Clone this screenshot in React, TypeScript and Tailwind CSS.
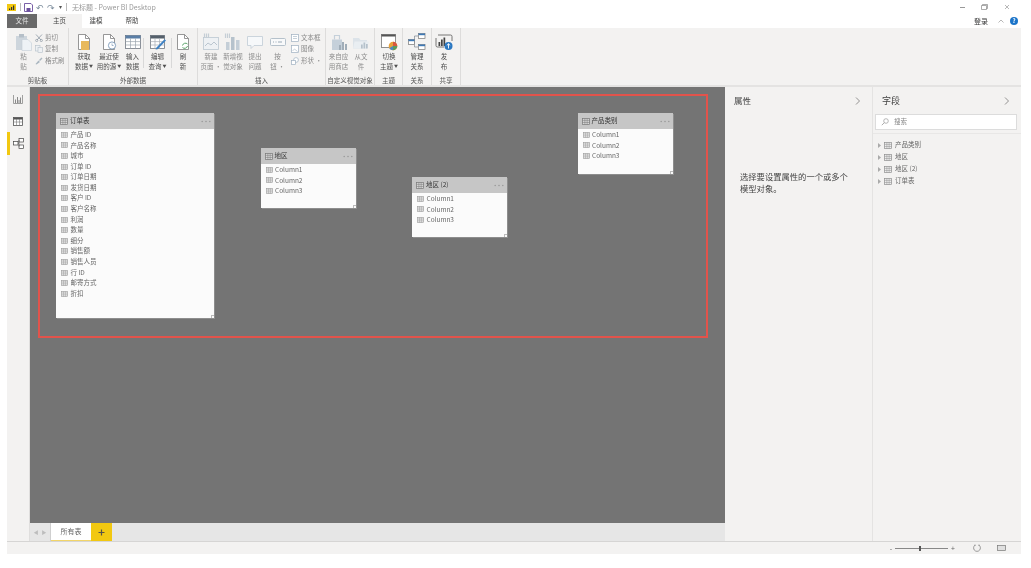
import React from "react";

const font = { fontFamily: '"Noto Sans CJK SC", "Liberation Sans", sans-serif' };

const TableGlyph = ({ c = "#8f8f8f", fill = "#e4e4e4", w = 9, h = 8 }: { c?: string; fill?: string; w?: number; h?: number }) => (
  <svg width={w} height={h} viewBox="0 0 9 8" className="shrink-0">
    <rect x="0.5" y="0.5" width="8" height="7" fill={fill} stroke={c} strokeWidth="0.8" />
    <path d="M0.5 2.7H8.5M0.5 5.1H8.5M3.2 0.5V7.5M5.8 0.5V7.5" stroke={c} strokeWidth="0.6" fill="none" />
  </svg>
);

const Paper = ({ children }: { children?: React.ReactNode }) => (
  <svg width="18" height="18" viewBox="0 0 18 18">
    <path d="M3.5 1.5H10.5L14.5 5.5V16.5H3.5Z" fill="#fff" stroke="#7d7d7d" strokeWidth="0.8" />
    <path d="M10.5 1.5V5.5H14.5" fill="none" stroke="#7d7d7d" strokeWidth="0.8" />
    {children}
  </svg>
);

const GridIcon = () => (
  <svg width="18" height="18" viewBox="0 0 18 18">
    <rect x="1.5" y="2.5" width="15" height="13" fill="#fff" stroke="#6f7780" strokeWidth="0.8" />
    <rect x="1.5" y="2.5" width="15" height="3" fill="#5a7ea6" />
    <path d="M1.5 8.6H16.5M1.5 12H16.5M6.5 5.5V15.5M11.5 5.5V15.5" stroke="#9aa3ad" strokeWidth="0.7" />
  </svg>
);

const EditIcon = () => (
  <svg width="18" height="18" viewBox="0 0 18 18">
    <rect x="1.5" y="2.5" width="14" height="13" fill="#fff" stroke="#6f7780" strokeWidth="0.8" />
    <rect x="1.5" y="2.5" width="14" height="3" fill="#55606b" />
    <path d="M1.5 8.6H15.5M1.5 12H15.5M6 5.5V15.5M10.5 5.5V15.5" stroke="#a8aeb5" strokeWidth="0.7" />
    <path d="M7 15L15.5 6.2L17 7.6L8.6 16.2L6.6 16.6Z" fill="#3f82c4" />
  </svg>
);

const Paste = () => (
  <svg width="18" height="18" viewBox="0 0 18 18">
    <rect x="1" y="3" width="11" height="14" fill="#cdd5dc" />
    <rect x="4" y="1" width="5" height="3.5" fill="#b5bfc8" />
    <path d="M7 6.5H13L16.5 10V17.5H7Z" fill="#eef2f6" stroke="#c2ccd6" strokeWidth="0.6" />
  </svg>
);

const NewPage = () => (
  <svg width="18" height="18" viewBox="0 0 18 18">
    <rect x="1.5" y="4.5" width="15" height="12" fill="#eef1f4" stroke="#bcc8d2" strokeWidth="0.8" />
    <path d="M2.5 0.5V5M4.5 0.5V5M6.5 0.5V5" stroke="#c5ced6" strokeWidth="1.2" />
    <path d="M3 13L6 10L9 12L12 9L15 12" stroke="#b3c0cb" strokeWidth="0.9" fill="none" />
  </svg>
);

const NewVisual = () => (
  <svg width="18" height="18" viewBox="0 0 18 18">
    <path d="M1.5 0.5V5M3.5 0.5V5M5.5 0.5V5" stroke="#c5ced6" strokeWidth="1.2" />
    <rect x="2" y="9" width="3.5" height="8" fill="#c4ced7" />
    <rect x="7" y="4" width="3.5" height="13" fill="#b6c2cc" />
    <rect x="12" y="7" width="3.5" height="10" fill="#c4ced7" />
  </svg>
);

const Bubble = () => (
  <svg width="18" height="18" viewBox="0 0 18 18">
    <path d="M1.5 3.5H16.5V12.5H8L5 15.5V12.5H1.5Z" fill="#f6f8fa" stroke="#c0ccd6" strokeWidth="0.8" />
  </svg>
);

const ButtonIcon = () => (
  <svg width="18" height="18" viewBox="0 0 18 18">
    <rect x="1.5" y="5.5" width="15" height="7" rx="1" fill="#f8f9fa" stroke="#aebbc6" strokeWidth="0.9" />
    <path d="M4 9H5M6.5 9H7.5M9 9H13" stroke="#9aa9b6" strokeWidth="1" />
  </svg>
);

const Store = () => (
  <svg width="18" height="18" viewBox="0 0 18 18">
    <path d="M2 6.5H12V17H2Z" fill="#c5d0da" />
    <path d="M4.5 6.5V2.5H9.5V6.5" fill="none" stroke="#c5d0da" strokeWidth="1.2" />
    <rect x="9" y="12" width="2" height="5" fill="#a0adb8" />
    <rect x="12" y="9" width="2" height="8" fill="#a0adb8" />
    <rect x="15" y="11" width="2" height="6" fill="#a0adb8" />
  </svg>
);

const Folder = () => (
  <svg width="18" height="18" viewBox="0 0 18 18">
    <path d="M1 5H7L8.5 7H15V15.5H1Z" fill="#dce3e9" />
    <path d="M2.5 8.5H17L15 15.5H1Z" fill="#e9eef2" />
    <rect x="9" y="11.5" width="1.7" height="4" fill="#b5c1cb" />
    <rect x="11.5" y="9.5" width="1.7" height="6" fill="#b5c1cb" />
    <rect x="14" y="11" width="1.7" height="4.5" fill="#b5c1cb" />
  </svg>
);

const Theme = () => (
  <svg width="18" height="18" viewBox="0 0 18 18">
    <rect x="1.5" y="1.5" width="14" height="13" fill="#fff" stroke="#777" strokeWidth="0.8" />
    <rect x="1.5" y="1.5" width="14" height="2" fill="#555" />
    <circle cx="13" cy="13" r="4.3" fill="#e8a23c" />
    <path d="M13 13V8.7A4.3 4.3 0 0 1 17.3 13Z" fill="#d9573f" />
    <path d="M13 13H17.3A4.3 4.3 0 0 1 13 17.3Z" fill="#5b9a5f" />
    <path d="M13 13V17.3A4.3 4.3 0 0 1 9.3 15.2Z" fill="#4d87c2" />
  </svg>
);

const Relations = () => (
  <svg width="18" height="18" viewBox="0 0 18 18">
    <path d="M10 3H6.5V9H3.5M10 14H6.5V9" fill="none" stroke="#7d8790" strokeWidth="0.7" />
    <rect x="10.5" y="0.5" width="6.5" height="5" fill="#fff" stroke="#777" strokeWidth="0.7" />
    <rect x="10.5" y="0.5" width="6.5" height="1.7" fill="#3f79b5" />
    <rect x="0.5" y="6.5" width="6" height="5" fill="#fff" stroke="#777" strokeWidth="0.7" />
    <rect x="0.5" y="6.5" width="6" height="1.7" fill="#3f79b5" />
    <rect x="10.5" y="11.5" width="6.5" height="5" fill="#fff" stroke="#777" strokeWidth="0.7" />
    <rect x="10.5" y="11.5" width="6.5" height="1.7" fill="#3f79b5" />
  </svg>
);

const Publish = () => (
  <svg width="18" height="18" viewBox="0 0 18 18">
    <path d="M3 2H15.5Q17 2 17 3.5V8M1 5V12.5Q1 14 2.5 14H9" fill="none" stroke="#555" strokeWidth="0.8" />
    <rect x="3.5" y="9" width="1.7" height="4" fill="#444" />
    <rect x="6" y="6.5" width="1.7" height="6.5" fill="#444" />
    <rect x="8.5" y="4.5" width="1.7" height="8.5" fill="#444" />
    <circle cx="13.5" cy="13" r="4" fill="#2b78c2" />
    <path d="M13.5 15.5V10.8M11.8 12.4L13.5 10.8L15.2 12.4" stroke="#fff" strokeWidth="0.9" fill="none" />
  </svg>
);

const RBtn = ({ w, icon, lines, arrow, dim }: { w: number; icon: React.ReactNode; lines: string[]; arrow?: boolean; dim?: boolean }) => (
  <div className="flex flex-col items-center shrink-0" style={{ width: w }}>
    <div className="h-[18px] flex items-center justify-center">{icon}</div>
    <div className={`mt-[1px] text-[6.5px] leading-[9.5px] text-center whitespace-nowrap ${dim ? "text-[#8b8b8b]" : "text-[#4f4f4f]"}`}>
      {lines.map((l, i) => (
        <div key={i}>
          {l}
          {arrow && i === lines.length - 1 ? <span className="ml-[1px] text-[4px] align-middle">▼</span> : null}
        </div>
      ))}
    </div>
  </div>
);

const SmallItem = ({ icon, label, dim }: { icon: React.ReactNode; label: string; dim?: boolean }) => (
  <div className={`flex items-center gap-[2px] h-[11.5px] text-[6.5px] whitespace-nowrap ${dim ? "text-[#8b8b8b]" : "text-[#555]"}`}>
    {icon}
    <span>{label}</span>
  </div>
);

const Group = ({ w, label, children, last, className = "" }: { w: number; label: string; children: React.ReactNode; last?: boolean; className?: string }) => (
  <div className={`flex flex-col h-full shrink-0 ${last ? "" : "border-r border-[#dddcdb]"}`} style={{ width: w }}>
    <div className={`flex-1 flex pt-[5px] ${className}`}>{children}</div>
    <div className="h-[10px] text-[6.5px] leading-[10px] text-center text-[#555] whitespace-nowrap">{label}</div>
  </div>
);

const VSep = () => <div className="w-px h-[30px] mt-[5px] bg-[#d8d8d8] shrink-0" />;

const Dots = () => (
  <svg width="10" height="3" viewBox="0 0 10 3" className="ml-auto shrink-0">
    <circle cx="1.2" cy="1.5" r="0.8" fill="#9a9a9a" />
    <circle cx="5" cy="1.5" r="0.8" fill="#9a9a9a" />
    <circle cx="8.8" cy="1.5" r="0.8" fill="#9a9a9a" />
  </svg>
);

const Card = ({ x, y, w, h, title, rows }: { x: number; y: number; w: number; h: number; title: string; rows: string[] }) => (
  <div className="absolute bg-[#fbfbfb] shadow-[1px_1px_0_#8d8d8d]" style={{ left: x, top: y, width: w, height: h }}>
    <div className="h-[16px] bg-[#c6c6c6] flex items-center pl-[4px] pr-[3px] gap-[2px] text-[6.5px] text-[#333]">
      <TableGlyph c="#777" fill="#d8d8d8" w={8} h={7} />
      <span className="whitespace-nowrap">{title}</span>
      <Dots />
    </div>
    <div className="pt-[0.5px] pl-[5px]">
      {rows.map((r) => (
        <div key={r} className="h-[10.6px] flex items-center gap-[2.5px] text-[6.5px] text-[#666] whitespace-nowrap">
          <TableGlyph c="#9a9a9a" fill="#e8e8e8" w={7} h={6} />
          <span>{r}</span>
        </div>
      ))}
    </div>
    <div className="absolute right-0 bottom-0 w-[3px] h-[3px] border-l border-t border-[#bbb]" />
  </div>
);

const Chevron = () => (
  <svg width="6" height="8" viewBox="0 0 6 8">
    <path d="M1 0.5L4.5 4L1 7.5" fill="none" stroke="#7a7a7a" strokeWidth="0.8" />
  </svg>
);

const orders = ["产品 ID", "产品名称", "城市", "订单 ID", "订单日期", "发货日期", "客户 ID", "客户名称", "利润", "数量", "细分", "销售额", "销售人员", "行 ID", "邮寄方式", "折扣"];
const cols = ["Column1", "Column2", "Column3"];

export default function App() {
  return (
    <div className="w-[1031px] h-[568px] bg-white overflow-hidden pl-[7px]" style={font}>
      <div className="w-[1014px] h-[554px] flex flex-col bg-[#f3f2f1] blur-[0.3px]">
        {/* title bar */}
        <div className="h-[14px] bg-white flex items-center shrink-0 text-[6.5px] text-[#9a9a9a] relative">
          <svg width="9" height="7" viewBox="0 0 9 7" className="shrink-0">
            <rect width="9" height="7" fill="#f2c811" />
            <path d="M2 6V4.5H3.2V6M4 6V3H5.2V6M6 6V1.5H7.2V6" fill="#333" />
          </svg>
          <div className="w-px h-[8px] bg-[#bbb] ml-[4px]" />
          <svg width="9" height="9" viewBox="0 0 9 9" className="ml-[3px]">
            <path d="M0.5 0.5H7L8.5 2V8.5H0.5Z" fill="none" stroke="#6b4f9e" strokeWidth="0.9" />
            <rect x="2.5" y="5" width="4" height="3.5" fill="#6b4f9e" />
          </svg>
          <span className="ml-[3px] text-[#7c8c9c] text-[9px] leading-none">↶</span>
          <span className="ml-[3px] text-[#7c8c9c] text-[9px] leading-none">↷</span>
          <span className="ml-[4px] text-[#555] text-[6px] leading-none">▾</span>
          <div className="w-px h-[8px] bg-[#bbb] ml-[4px]" />
          <span className="ml-[5px] whitespace-nowrap text-[7px]">无标题 - Power BI Desktop</span>
          <div className="ml-auto flex items-center gap-[16px] pr-[11px] text-[#888]">
            <div className="w-[5px] h-px bg-[#999]" />
            <svg width="7" height="6" viewBox="0 0 7 6"><path d="M1.5 1.5V0.5H6.5V4.5H5.5M0.5 1.5H5.5V5.5H0.5Z" fill="none" stroke="#888" strokeWidth="0.7" /></svg>
            <svg width="6" height="6" viewBox="0 0 6 6"><path d="M1 1L5 5M5 1L1 5" stroke="#999" strokeWidth="0.7" /></svg>
          </div>
        </div>
        {/* tabs */}
        <div className="h-[14px] bg-white flex items-stretch shrink-0 text-[6.5px] relative">
          <div className="w-[30px] bg-[#696969] text-[#e8e8e8] flex items-center justify-center">文件</div>
          <div className="w-[45px] bg-[#f3f2f1] text-[#444] flex items-center justify-center">主页</div>
          <div className="w-[28px] text-[#444] flex items-center justify-center">建模</div>
          <div className="w-[44px] text-[#444] flex items-center justify-center">帮助</div>
          <div className="ml-auto flex items-center pr-[3px]">
            <span className="text-[#333] text-[7px]">登录</span>
            <svg width="6" height="4" viewBox="0 0 6 4" className="ml-[10px]"><path d="M0.5 3.5L3 1L5.5 3.5" fill="none" stroke="#999" strokeWidth="0.7" /></svg>
            <div className="ml-[6px] w-[8px] h-[8px] rounded-full bg-[#1b74c9] text-white text-[6px] leading-[8px] text-center font-bold">?</div>
          </div>
        </div>
        {/* ribbon */}
        <div className="h-[57px] flex items-stretch shrink-0 border-b-2 border-[#e4e3e2] box-content">
          <Group w={62} label="剪贴板">
            <RBtn w={33} dim icon={<Paste />} lines={["粘", "贴"]} />
            <div className="-ml-[5px] -mt-[1px] flex flex-col">
              <SmallItem dim label="剪切" icon={<svg width="8" height="8" viewBox="0 0 8 8"><path d="M1 0.5L6 6M7 0.5L2 6" stroke="#8a97a3" strokeWidth="0.8" /><circle cx="1.7" cy="6.5" r="1.1" fill="none" stroke="#8a97a3" strokeWidth="0.7" /><circle cx="6.3" cy="6.5" r="1.1" fill="none" stroke="#8a97a3" strokeWidth="0.7" /></svg>} />
              <SmallItem dim label="复制" icon={<svg width="8" height="8" viewBox="0 0 8 8"><rect x="0.5" y="0.5" width="4.5" height="5.5" fill="#eef1f4" stroke="#b4bfc9" strokeWidth="0.6" /><rect x="3" y="2.5" width="4.5" height="5" fill="#eef1f4" stroke="#b4bfc9" strokeWidth="0.6" /></svg>} />
              <SmallItem dim label="格式刷" icon={<svg width="8" height="8" viewBox="0 0 8 8"><path d="M0.5 7L3.5 3.5L5 5L1.5 7.5ZM4 3L6.5 0.5L7.5 1.5L5 4Z" fill="#aab6c0" /></svg>} />
            </div>
          </Group>
          <Group w={129} label="外部数据" className="pl-[3px]">
            <RBtn w={24} icon={<Paper><rect x="6" y="8" width="8" height="9" fill="#e8b95c" /></Paper>} lines={["获取", "数据"]} arrow />
            <RBtn w={26} icon={<Paper><circle cx="12" cy="12.5" r="3.6" fill="#fff" stroke="#6c8db0" strokeWidth="0.8" /><path d="M12 10.5V12.5H13.6" fill="none" stroke="#6c8db0" strokeWidth="0.6" /></Paper>} lines={["最近使", "用的源"]} arrow />
            <RBtn w={21} icon={<GridIcon />} lines={["输入", "数据"]} />
            <VSep />
            <RBtn w={27} icon={<EditIcon />} lines={["编辑", "查询"]} arrow />
            <VSep />
            <RBtn w={22} icon={<Paper><path d="M8.5 12.5A3 3 0 0 1 13.5 11M13.5 13A3 3 0 0 1 8.5 14.5" fill="none" stroke="#5aa469" strokeWidth="1" /></Paper>} lines={["刷", "新"]} />
          </Group>
          <Group w={128} label="插入" className="pl-[2px]">
            <RBtn w={22} dim icon={<NewPage />} lines={["新建", "页面 ·"]} />
            <RBtn w={22} dim icon={<NewVisual />} lines={["新增视", "觉对象"]} />
            <RBtn w={22} dim icon={<Bubble />} lines={["提出", "问题"]} />
            <RBtn w={23} dim icon={<ButtonIcon />} lines={["按", "钮 ·"]} />
            <div className="-mt-[1px] pl-[2px] flex flex-col">
              <SmallItem dim label="文本框" icon={<svg width="8" height="8" viewBox="0 0 8 8"><rect x="0.5" y="0.5" width="7" height="7" fill="#fff" stroke="#9fb0c0" strokeWidth="0.7" /><path d="M2 2.5H6M2 4.5H6" stroke="#9fb0c0" strokeWidth="0.6" /></svg>} />
              <SmallItem dim label="图像" icon={<svg width="8" height="8" viewBox="0 0 8 8"><rect x="0.5" y="0.5" width="7" height="7" fill="#fff" stroke="#9fb0c0" strokeWidth="0.7" /><path d="M1.5 6L3.5 4L6.5 6.5" stroke="#9fb0c0" strokeWidth="0.6" fill="none" /></svg>} />
              <SmallItem dim label="形状 ·" icon={<svg width="8" height="8" viewBox="0 0 8 8"><circle cx="5" cy="3" r="2.4" fill="#fff" stroke="#9fb0c0" strokeWidth="0.7" /><rect x="0.5" y="3.5" width="4" height="4" fill="#fff" stroke="#9fb0c0" strokeWidth="0.7" /></svg>} />
            </div>
          </Group>
          <Group w={49} label="自定义视觉对象" className="pl-[1px]">
            <RBtn w={23} dim icon={<Store />} lines={["来自应", "用商店"]} />
            <RBtn w={22} dim icon={<Folder />} lines={["从文", "件"]} />
          </Group>
          <Group w={28} label="主题">
            <RBtn w={28} icon={<Theme />} lines={["切换", "主题"]} arrow />
          </Group>
          <Group w={29} label="关系">
            <RBtn w={28} icon={<Relations />} lines={["管理", "关系"]} />
          </Group>
          <Group w={29} label="共享">
            <RBtn w={24} icon={<Publish />} lines={["发", "布"]} />
          </Group>
          <div className="flex-1" />
        </div>
        {/* main */}
        <div className="flex-1 flex min-h-0">
          <div className="w-[23px] shrink-0 flex flex-col items-stretch pt-[7px] border-r border-[#dfdedd]">
            <div className="h-[11px] flex items-center justify-center">
              <svg width="10" height="9" viewBox="0 0 10 9"><path d="M0.5 0V8.5H9.5M9.5 0V8.5" fill="none" stroke="#8a8a8a" strokeWidth="0.8" /><path d="M2.5 8V4.5M4.5 8V2M6 8V5M7.5 8V2.5" stroke="#8a8a8a" strokeWidth="1" /></svg>
            </div>
            <div className="h-[11px] mt-[11px] flex items-center justify-center">
              <svg width="10" height="9" viewBox="0 0 10 9"><rect x="0.5" y="0.5" width="9" height="8" fill="#fff" stroke="#555" strokeWidth="0.8" /><rect x="0.5" y="0.5" width="9" height="2" fill="#555" /><path d="M0.5 5H9.5M3.5 2V8.5M6.5 2V8.5" stroke="#777" strokeWidth="0.6" /></svg>
            </div>
            <div className="h-[23px] mt-[5px] border-l-[3px] border-[#f2c811] flex items-center justify-center pr-[3px]">
              <svg width="11" height="11" viewBox="0 0 11 11"><rect x="6" y="0.5" width="4.5" height="3.5" fill="#fff" stroke="#444" strokeWidth="0.7" /><rect x="0.5" y="3.5" width="4.5" height="3.5" fill="#fff" stroke="#444" strokeWidth="0.7" /><rect x="6" y="7" width="4.5" height="3.5" fill="#fff" stroke="#444" strokeWidth="0.7" /><path d="M5 5.2H6V2M6 5.2V8.5" fill="none" stroke="#444" strokeWidth="0.6" /></svg>
            </div>
          </div>
          <div className="w-[695px] shrink-0 flex flex-col">
            <div className="relative flex-1 bg-[#747474]">
              <div className="absolute left-[8px] top-[7px] w-[670px] h-[244px] border-[2.5px] border-[#e2534b]" />
              <Card x={26} y={26} w={158} h={205} title="订单表" rows={orders} />
              <Card x={230.5} y={61} w={95} h={60} title="地区" rows={cols} />
              <Card x={382} y={90} w={95} h={60} title="地区 (2)" rows={cols} />
              <Card x={547.5} y={26} w={95} h={61} title="产品类别" rows={cols} />
            </div>
            <div className="h-[18px] shrink-0 bg-[#e6e6e6] flex items-stretch">
              <div className="w-[21px] flex items-center justify-around px-[2px] border-r border-[#cfcfcf] text-[#bdbdbd] text-[5px]">
                <span>◀</span>
                <span>▶</span>
              </div>
              <div className="w-[40px] bg-white border-b-[1.5px] border-[#f2d569] flex items-center justify-center text-[7px] text-[#666]">所有表</div>
              <div className="w-[21px] bg-[#f2c811] flex items-center justify-center">
                <svg width="7" height="7" viewBox="0 0 7 7"><path d="M3.5 0.5V6.5M0.5 3.5H6.5" stroke="#55534a" strokeWidth="1.2" /></svg>
              </div>
            </div>
          </div>
          <div className="w-[148px] shrink-0 border-r border-[#e4e3e2] pl-[9px] pr-[11px] pt-[6px]">
            <div className="flex items-center justify-between h-[15px] text-[8.5px] text-[#444]">
              <span>属性</span>
              <Chevron />
            </div>
            <div className="mt-[62px] ml-[6px] w-[112px] text-[8.3px] leading-[12px] text-[#444]">选择要设置属性的一个或多个模型对象。</div>
          </div>
          <div className="flex-1 min-w-0">
            <div className="flex items-center justify-between h-[15px] mt-[6px] pl-[9px] pr-[11px] text-[9px] text-[#444]">
              <span>字段</span>
              <Chevron />
            </div>
            <div className="ml-[2px] mt-[6px] h-[16px] w-[142px] bg-white border border-[#dcdcdc] flex items-center pl-[5px] gap-[5px] text-[6.5px] text-[#888]">
              <svg width="8" height="8" viewBox="0 0 8 8"><circle cx="5" cy="3" r="2.3" fill="none" stroke="#999" strokeWidth="0.7" /><path d="M3.3 4.7L0.8 7.2" stroke="#999" strokeWidth="0.8" /></svg>
              <span>搜索</span>
            </div>
            <div className="mt-[3px] border-t border-[#e8e7e6] pt-[5px]">
              {["产品类别", "地区", "地区 (2)", "订单表"].map((t) => (
                <div key={t} className="h-[12px] flex items-center pl-[5px] text-[6.5px] text-[#666] whitespace-nowrap">
                  <svg width="3" height="5" viewBox="0 0 3 5"><path d="M0 0L3 2.5L0 5Z" fill="#aaa" /></svg>
                  <span className="ml-[3px]"><TableGlyph c="#8f8f8f" fill="#efefef" w={8} h={7} /></span>
                  <span className="ml-[3px]">{t}</span>
                </div>
              ))}
            </div>
          </div>
        </div>
        {/* status bar */}
        <div className="h-[13px] shrink-0 border-t border-[#d6d5d4] flex items-center justify-end pr-[15px] text-[#666]">
          <span className="text-[7px] leading-none">-</span>
          <div className="relative w-[53px] h-px bg-[#888] mx-[3px]">
            <div className="absolute left-[24px] -top-[2px] w-[2px] h-[5px] bg-[#555]" />
          </div>
          <span className="text-[7px] leading-none">+</span>
          <svg width="8" height="9" viewBox="0 0 8 9" className="ml-[18px]"><path d="M2 1.2A3.4 3.4 0 1 0 6 1.2M2 0.5V2M6 0.5V2" fill="none" stroke="#777" strokeWidth="0.7" /></svg>
          <svg width="9" height="6" viewBox="0 0 9 6" className="ml-[16px]"><rect x="0.5" y="0.5" width="8" height="5" fill="#e0e0e0" stroke="#777" strokeWidth="0.7" /></svg>
        </div>
      </div>
    </div>
  );
}
